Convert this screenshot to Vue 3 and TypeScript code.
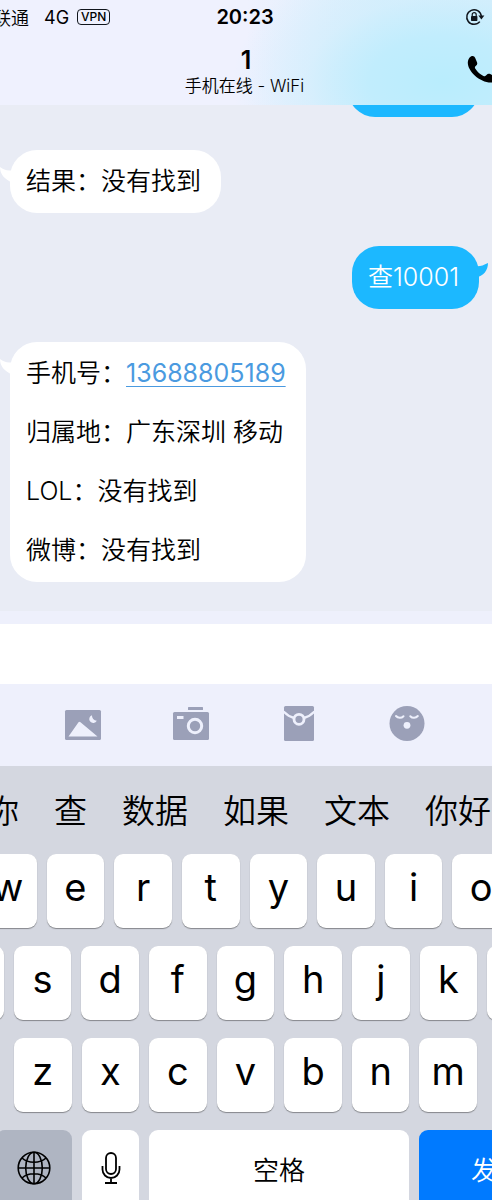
<script setup lang="ts">
import { ref } from 'vue'

interface Line {
  text: string
  link?: string
}
interface Message {
  id: number
  mine: boolean
  lines: Line[]
}

const messages: Message[] = [
  { id: 1, mine: false, lines: [{ text: '结果：没有找到' }] },
  { id: 2, mine: true, lines: [{ text: '查10001' }] },
  {
    id: 3,
    mine: false,
    lines: [
      { text: '手机号：', link: '13688805189' },
      { text: '归属地：广东深圳 移动' },
      { text: 'LOL：没有找到' },
      { text: '微博：没有找到' },
    ],
  },
]

const candidates: string[] = ['你', '查', '数据', '如果', '文本', '你好']
const rows: { name: string; keys: string[] }[] = [
  { name: 'top', keys: ['w', 'e', 'r', 't', 'y', 'u', 'i', 'o'] },
  { name: 'home', keys: ['', 's', 'd', 'f', 'g', 'h', 'j', 'k', ''] },
  { name: 'low', keys: ['z', 'x', 'c', 'v', 'b', 'n', 'm'] },
]

const draft = ref<string>('')
function type(text: string): void {
  draft.value += text
}
</script>

<template>
  <div class="phone">
    <header class="header">
      <div class="status">
        <div class="carrier">
          <span>联通</span>
          <span class="net">4G</span>
          <span class="vpn">VPN</span>
        </div>
        <time class="clock">20:23</time>
        <svg class="lock" viewBox="0 0 20 18" aria-hidden="true">
          <path d="M14.8 13.6A7.3 7.3 0 1 1 16.3 8" fill="none" stroke="#10151c" stroke-width="1.5" />
          <path d="M13.4 7.4h6l-3 4.2z" fill="#10151c" />
          <rect x="6" y="8" width="6.4" height="5" rx=".7" fill="#10151c" />
          <path d="M7.2 8V6.7a2 2 0 0 1 4 0V8" fill="none" stroke="#10151c" stroke-width="1.2" />
        </svg>
      </div>
      <div class="titlebar">
        <h1>1</h1>
        <p>手机在线 - WiFi</p>
        <button class="call" type="button" aria-label="语音通话">
          <svg viewBox="0 0 34 30" aria-hidden="true">
            <path d="M1 6C1.500 3.500 3 1.600 4.800 1.100c1.600-.4 2.800.4 3.400 1.900l1.800 4.200c.6 1.500.2 2.600-1 3.600-1.300 1-1.400 1.700-.6 3 2 3.300 4.600 5.600 8 7.100 1.400.6 2.200.4 3.100-.8 1-1.300 2.200-1.700 3.700-1l4 1.800c1.500.7 2.200 1.900 1.700 3.400-.5 1.700-2.300 3.200-4.500 3.300C12 28-1 14.500 1 6z" fill="#000" />
          </svg>
        </button>
      </div>
    </header>

    <main class="chat">
      <div class="bubble mine previous"></div>
      <div v-for="m in messages" :key="m.id" class="bubble" :class="m.mine ? 'mine' : 'theirs'">
        <svg v-if="m.mine" class="tail" viewBox="0 0 14 20" aria-hidden="true">
          <path d="M0 4C4 5 8 3.500 13 1c0 7-4 13-13 15z" fill="#1cb8ff" />
        </svg>
        <svg v-else class="tail" viewBox="0 0 14 20" aria-hidden="true">
          <path d="M14 4C9 5.500 5 4 1 1c0 7 4 12 13 16z" fill="#fff" />
        </svg>
        <p v-for="line in m.lines" :key="line.text">{{ line.text }}<a v-if="line.link" :href="'tel:' + line.link">{{ line.link }}</a></p>
      </div>
    </main>

    <section class="composer">
      <input v-model="draft" type="text" aria-label="消息" />
      <div class="tools">
        <button type="button" aria-label="图片">
          <svg viewBox="0 0 38 38">
            <rect x="1" y="5" width="36" height="30" rx="1.500" fill="#9ba0b8" />
            <path d="M4.500 31.500 14.500 17.200q1-1 2 0L33.500 31.500z" fill="#eef0fc" />
            <path d="M28 10.200a4 4 0 1 0 4.800 5.600A5 5 0 0 1 28 10.200z" fill="#eef0fc" />
          </svg>
        </button>
        <button type="button" aria-label="拍照">
          <svg viewBox="0 0 38 38">
            <rect x="16" y="2" width="15" height="3" rx=".5" fill="#9ba0b8" />
            <rect x="1" y="7" width="36" height="28" rx="1.500" fill="#9ba0b8" />
            <rect x="5" y="11" width="6.500" height="3" fill="#eef0fc" />
            <circle cx="23" cy="21" r="6.700" fill="none" stroke="#eef0fc" stroke-width="3" />
          </svg>
        </button>
        <button type="button" aria-label="红包">
          <svg viewBox="0 0 38 38">
            <rect x="4" y="1" width="30" height="35" rx="1.500" fill="#9ba0b8" />
            <path d="M3.500 6.500C7 10 10 12 14 13M34.500 6.500C31 10 28 12 24 13" fill="none" stroke="#eef0fc" stroke-width="2.400" />
            <circle cx="19" cy="14.300" r="5" fill="none" stroke="#eef0fc" stroke-width="2.800" />
          </svg>
        </button>
        <button type="button" aria-label="表情">
          <svg viewBox="0 0 38 38">
            <circle cx="19" cy="18.500" r="17.500" fill="#9ba0b8" />
            <path d="M8 11c2 2.400 5.500 2.400 7.500.3M22.300 11.300c2 2.100 5.500 2.100 7.500-.3" fill="none" stroke="#eef0fc" stroke-width="2" stroke-linecap="round" />
            <circle cx="19" cy="20.300" r="3.400" fill="#eef0fc" />
          </svg>
        </button>
      </div>
    </section>

    <section class="keyboard">
      <div class="candidates">
        <button v-for="c in candidates" :key="c" type="button" @click="type(c)">{{ c }}</button>
      </div>
      <div class="keys">
        <div v-for="row in rows" :key="row.name" class="row" :class="row.name">
          <button v-for="(k, i) in row.keys" :key="i" type="button" class="key" @click="type(k)">{{ k }}</button>
        </div>
        <div class="row bottom">
          <button type="button" class="key globe" aria-label="切换键盘">
            <svg viewBox="0 0 34 34" fill="none" stroke="#000" stroke-width="1.600">
              <circle cx="17" cy="17" r="15.800" />
              <ellipse cx="17" cy="17" rx="8.300" ry="15.800" />
              <path d="M17 1.200v31.600M1.200 17h31.600M5 7c6 5.600 18 5.600 24 0M5 27c6-5.600 18-5.600 24 0" />
            </svg>
          </button>
          <button type="button" class="key" aria-label="语音输入">
            <svg viewBox="0 0 34 34" fill="none" stroke="#000" stroke-width="1.800">
              <rect x="12" y="2" width="10" height="21" rx="5" />
              <path d="M8.500 15v3.500a8.500 8.500 0 0 0 17 0V15M17 27v5M11 32h12" />
            </svg>
          </button>
          <button type="button" class="key space" @click="type(' ')">空格</button>
          <button type="button" class="key send">发送</button>
        </div>
      </div>
    </section>
  </div>
</template>

<style>
body {
  margin: 0;
}
</style>

<style scoped>
.phone {
  display: flex;
  flex-direction: column;
  min-height: 100vh;
  overflow: hidden;
  font-family: Inter, "Noto Sans CJK SC", sans-serif;
  font-weight: 350;
  color: #000;
}
h1,
p {
  margin: 0;
}
button {
  padding: 0;
  border: 0;
  background: none;
  font: inherit;
  color: inherit;
}
svg {
  display: block;
}
.header {
  height: 105px;
  background:
    radial-gradient(ellipse 210px 130px at 90% 78%, #b9edfd 0%, #c1edfd 35%, rgba(208, 238, 253, 0.6) 65%, rgba(239, 241, 254, 0) 100%),
    linear-gradient(90deg, #eff1fe 50%, #d8effc 78%, #d3eefb 100%);
}
.status {
  display: grid;
  grid-template-columns: 1fr auto 1fr;
  align-items: center;
  height: 34px;
  padding-right: 2px;
}
.carrier {
  display: flex;
  align-items: center;
  margin-left: -7px;
  font-size: 18px;
}
.net {
  margin-left: 15px;
  font-weight: 400;
}
.vpn {
  margin-left: 8px;
  padding: 0 3px;
  border: 1px solid #10151c;
  border-radius: 4px;
  font-size: 12px;
  font-weight: 500;
  line-height: 14px;
}
.clock {
  font-size: 20px;
  font-weight: 600;
}
.lock {
  justify-self: end;
  width: 20px;
  height: 18px;
  margin-right: 5px;
}
.titlebar {
  position: relative;
  text-align: center;
}
h1 {
  padding-top: 10px;
  font-size: 25px;
  line-height: 32px;
  font-weight: 600;
}
.titlebar p {
  padding-right: 3px;
  font-size: 17px;
  line-height: 20px;
}
.call {
  position: absolute;
  right: -9px;
  top: 21px;
}
.call svg {
  width: 34px;
  height: 30px;
}
.chat {
  display: flex;
  flex: 1;
  flex-direction: column;
  align-items: flex-start;
  gap: 33px;
  padding: 0 13px 29px 10px;
  background: #e9ecf5;
  overflow: hidden;
}
.bubble {
  position: relative;
  padding: 2px 20px 2px 16px;
  border-radius: 27px;
  background: #fff;
  font-size: 25px;
  line-height: 59px;
}
.bubble.mine {
  align-self: flex-end;
  background: #1cb8ff;
  color: #fff;
}
.bubble.previous {
  box-sizing: border-box;
  width: 131px;
  height: 63px;
  margin-top: -51px;
}
.bubble a {
  color: #4a9ae0;
  font-weight: 400;
  text-decoration-thickness: 1px;
  text-underline-offset: 4px;
}
.tail {
  position: absolute;
  top: 16px;
  width: 14px;
  height: 20px;
}
.theirs .tail {
  left: -11px;
}
.mine .tail {
  right: -10px;
}
.composer {
  padding-top: 13px;
  background: #eef0fc;
}
.composer input {
  display: block;
  box-sizing: border-box;
  width: 100%;
  height: 60px;
  padding: 0 16px;
  border: 0;
  outline: 0;
  background: #fff;
  font: inherit;
  font-size: 25px;
}
.tools {
  display: flex;
  align-items: center;
  justify-content: space-between;
  box-sizing: border-box;
  height: 82px;
  padding: 0 66px 2px 64px;
}
.tools svg {
  width: 38px;
  height: 38px;
}
.keyboard {
  background: #d4d7e0;
}
.candidates {
  display: flex;
  box-sizing: border-box;
  align-items: center;
  gap: 35px;
  height: 88px;
  margin-left: -14px;
  padding-bottom: 2px;
  font-size: 33px;
  white-space: nowrap;
}
.candidates button {
  flex: none;
}
.keys {
  display: grid;
  gap: 18px;
}
.row {
  display: grid;
  grid-auto-flow: column;
  grid-auto-columns: minmax(0, 1fr);
  gap: 10px;
}
.top {
  margin: 0 -18px 0 -21px;
}
.home {
  margin: 0 -53px 0 -54px;
}
.low {
  margin: 0 15px 0 14px;
}
.bottom {
  grid-template-columns: 76px 57px minmax(0, 1fr) 156px;
  margin: 0 -83px 0 -4px;
}
.key {
  display: flex;
  align-items: center;
  justify-content: center;
  height: 74px;
  padding-bottom: 8px;
  border-radius: 9px;
  background: #fff;
  box-shadow: 0 1px 1px #85878c;
  font-size: 38px;
  font-weight: 400;
}
.bottom .key {
  height: 70px;
  padding: 6px 0 0;
  border-radius: 9px 9px 0 0;
  box-shadow: none;
  font-size: 26px;
  font-weight: 350;
}
.bottom svg {
  width: 34px;
  height: 34px;
}
.bottom .globe {
  background: #afb5c2;
}
.bottom .send {
  background: #007aff;
  color: #fff;
}
</style>
